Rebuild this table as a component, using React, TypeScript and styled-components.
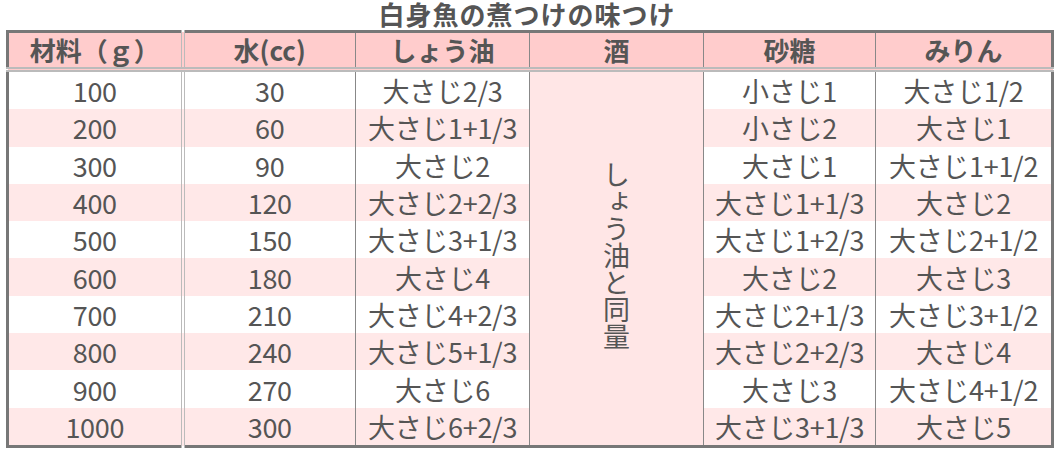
import React from "react";
import styled, { createGlobalStyle } from "styled-components";

const Global = createGlobalStyle`
  html, body { margin: 0; padding: 0; background: #fff; }
  body { font-family: "Noto Sans CJK JP", "Noto Sans", sans-serif; color: #555; }
`;

const Page = styled.div`
  width: 1057px;
  padding: 0 0 0 6px;
  box-sizing: border-box;
`;

const Title = styled.div`
  width: 1042px;
  text-align: center;
  font-size: 26px;
  font-weight: 700;
  line-height: 28px;
  height: 28px;
  padding-bottom: 2px;
  color: #555;
  letter-spacing: 1px;
  white-space: nowrap;
`;

const Table = styled.table`
  width: 1045px;
  border-collapse: collapse;
  table-layout: fixed;
  border: 3px solid #777;
`;

const HeadCell = styled.th<{ $double?: boolean }>`
  background: #ffcccc;
  height: 34px;
  padding: 0;
  font-size: 26px;
  font-weight: 700;
  line-height: 32px;
  color: #555;
  border-bottom: 5px double #bbb;
  border-right: ${(p) => (p.$double ? "4px double #bbb" : "1px solid #888")};
  text-align: center;
  white-space: nowrap;
`;

const Row = styled.tr<{ $pink: boolean }>`
  background: ${(p) => (p.$pink ? "#ffe8e8" : "#ffffff")};
`;

const Cell = styled.td<{ $double?: boolean }>`
  height: 37.3px;
  padding: 0;
  font-size: 27px;
  line-height: 35px;
  text-align: center;
  color: #555;
  white-space: nowrap;
  letter-spacing: -0.3px;
  border-right: ${(p) => (p.$double ? "4px double #bbb" : "1px solid #888")};
`;

const MergedCell = styled.td`
  background: #ffe6e6;
  border-right: 1px solid #888;
  text-align: center;
  vertical-align: middle;
  padding: 0;
`;

const Vertical = styled.span`
  display: inline-block;
  writing-mode: vertical-rl;
  font-size: 27px;
  line-height: 1;
  color: #555;
`;

const headers = ["材料（ｇ）", "水(cc)", "しょう油", "酒", "砂糖", "みりん"];
const rows: [string, string, string, string, string][] = [
  ["100", "30", "大さじ2/3", "小さじ1", "大さじ1/2"],
  ["200", "60", "大さじ1+1/3", "小さじ2", "大さじ1"],
  ["300", "90", "大さじ2", "大さじ1", "大さじ1+1/2"],
  ["400", "120", "大さじ2+2/3", "大さじ1+1/3", "大さじ2"],
  ["500", "150", "大さじ3+1/3", "大さじ1+2/3", "大さじ2+1/2"],
  ["600", "180", "大さじ4", "大さじ2", "大さじ3"],
  ["700", "210", "大さじ4+2/3", "大さじ2+1/3", "大さじ3+1/2"],
  ["800", "240", "大さじ5+1/3", "大さじ2+2/3", "大さじ4"],
  ["900", "270", "大さじ6", "大さじ3", "大さじ4+1/2"],
  ["1000", "300", "大さじ6+2/3", "大さじ3+1/3", "大さじ5"],
];

const widths = [175, 173, 174, 174, 172, 177];

export default function App() {
  return (
    <Page>
      <Global />
      <Title>白身魚の煮つけの味つけ</Title>
      <Table>
        <colgroup>
          {widths.map((w, i) => (
            <col key={i} style={{ width: w }} />
          ))}
        </colgroup>
        <thead>
          <tr>
            {headers.map((h, i) => (
              <HeadCell key={h} $double={i === 0}>
                {h}
              </HeadCell>
            ))}
          </tr>
        </thead>
        <tbody>
          {rows.map((r, i) => (
            <Row key={r[0]} $pink={i % 2 === 1}>
              <Cell $double>{r[0]}</Cell>
              <Cell>{r[1]}</Cell>
              <Cell>{r[2]}</Cell>
              {i === 0 && (
                <MergedCell rowSpan={10}>
                  <Vertical>しょう油と同量</Vertical>
                </MergedCell>
              )}
              <Cell>{r[3]}</Cell>
              <Cell>{r[4]}</Cell>
            </Row>
          ))}
        </tbody>
      </Table>
    </Page>
  );
}
